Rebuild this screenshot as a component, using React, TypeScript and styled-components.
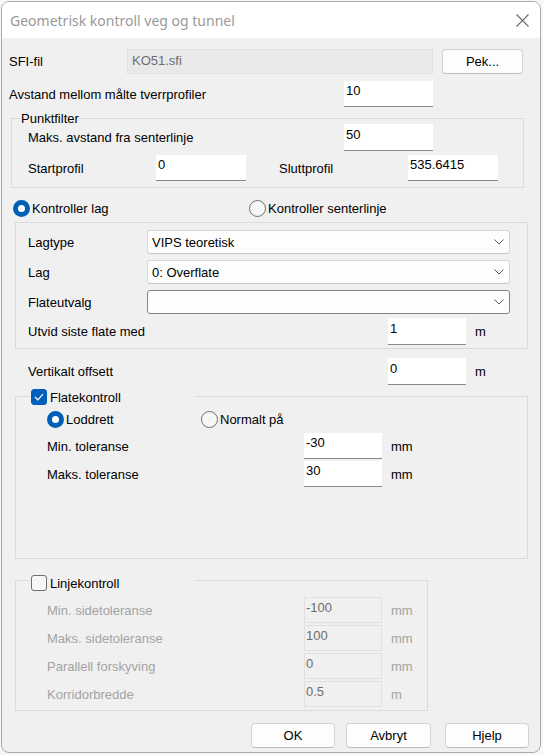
import React from "react";
import styled, { createGlobalStyle } from "styled-components";

const Global = createGlobalStyle`
  html, body { margin: 0; padding: 0; background: #f7f7f7; }
  body { font-family: "Liberation Sans", Arial, sans-serif; font-size: 13px; color: #000; }
  * { box-sizing: border-box; }
`;

const Window = styled.div`
  margin: 1px 0 0 1px;
  width: 540px;
  height: 752px;
  border: 1px solid #a9a9a9;
  border-radius: 8px;
  overflow: hidden;
  background: #f0f0f0;
  display: flex;
  flex-direction: column;
`;

const TitleBar = styled.div`
  flex: none;
  height: 36px;
  background: #ffffff;
  display: flex;
  align-items: center;
  justify-content: space-between;
  padding: 0 11px 0 8px;
`;

const Title = styled.div`
  font-family: "Segoe UI", "Noto Sans", sans-serif;
  font-size: 14px;
  color: #999999;
`;

const Body = styled.div`
  flex: 1;
  display: flex;
  flex-direction: column;
  padding-top: 11px;
`;

const Row = styled.div<{ $ml?: number; $mt?: number; $h: number }>`
  display: flex;
  align-items: center;
  height: ${(p) => p.$h}px;
  margin-left: ${(p) => p.$ml ?? 0}px;
  margin-top: ${(p) => p.$mt ?? 0}px;
  flex: none;
`;

const Label = styled.span<{ $w?: number; $ml?: number; $disabled?: boolean }>`
  flex: none;
  width: ${(p) => (p.$w ? `${p.$w}px` : "auto")};
  margin-left: ${(p) => p.$ml ?? 0}px;
  color: ${(p) => (p.$disabled ? "#a3a3a3" : "#000")};
  white-space: nowrap;
`;

const Input = styled.input<{ $w: number; $h?: number }>`
  flex: none;
  width: ${(p) => p.$w}px;
  height: ${(p) => p.$h ?? 26}px;
  font: inherit;
  color: #000;
  background: #ffffff;
  border: none;
  border-bottom: 1px solid #8a8a8a;
  border-radius: 0;
  padding: 0 2px 6px 2px;
  margin: 0;
  outline: none;
  &:disabled {
    background: #f0f0f0;
    border: 1px solid #e0e0e0;
    color: #6d6d6d;
    padding: 0 1px 6px 1px;
  }
`;

const ReadField = styled.div<{ $w: number }>`
  flex: none;
  width: ${(p) => p.$w}px;
  height: 25px;
  background: #e9e9e9;
  border: 1px solid #e2e2e2;
  color: #6d6d6d;
  padding: 3px 0 0 4px;
`;

const Button = styled.button<{ $w: number; $ml?: number }>`
  flex: none;
  width: ${(p) => p.$w}px;
  height: 25px;
  margin: 0 0 0 ${(p) => p.$ml ?? 0}px;
  font: inherit;
  color: #000;
  background: #fdfdfd;
  border: 1px solid #d3d3d3;
  border-bottom-color: #bdbdbd;
  border-radius: 4px;
  padding: 0;
`;

const Group = styled.div<{ $w: number; $h: number; $ml: number; $mt: number; $pt: number; $pl: number }>`
  position: relative;
  flex: none;
  width: ${(p) => p.$w}px;
  height: ${(p) => p.$h}px;
  margin-left: ${(p) => p.$ml}px;
  margin-top: ${(p) => p.$mt}px;
  padding: ${(p) => p.$pt}px 0 0 ${(p) => p.$pl}px;
  border: 1px solid #dadada;
  display: flex;
  flex-direction: column;
`;

const Legend = styled.div<{ $left: number; $top: number; $w?: number }>`
  position: absolute;
  left: ${(p) => p.$left}px;
  top: ${(p) => p.$top}px;
  width: ${(p) => (p.$w ? `${p.$w}px` : "auto")};
  height: 16px;
  display: flex;
  align-items: center;
  background: #f0f0f0;
  padding: 0 1px;
`;

const Option = styled.div<{ $w?: number }>`
  display: flex;
  align-items: center;
  width: ${(p) => (p.$w ? `${p.$w}px` : "auto")};
  flex: none;
`;

const RadioDot = styled.span<{ $on?: boolean }>`
  flex: none;
  width: 17px;
  height: 17px;
  border-radius: 50%;
  background: ${(p) => (p.$on ? "#ffffff" : "#f7f7f7")};
  border: ${(p) => (p.$on ? "5px solid #005fb8" : "1px solid #6f6f6f")};
  margin-right: 2px;
`;

const CheckBox = styled.span<{ $on?: boolean }>`
  flex: none;
  width: 16px;
  height: 16px;
  border-radius: 3px;
  background: ${(p) => (p.$on ? "#005fb8" : "#f7f7f7")};
  border: ${(p) => (p.$on ? "1px solid #005fb8" : "1px solid #6f6f6f")};
  display: flex;
  align-items: center;
  justify-content: center;
  margin-right: 3px;
`;

const Select = styled.div<{ $w: number; $focus?: boolean }>`
  flex: none;
  width: ${(p) => p.$w}px;
  height: 24px;
  background: #fdfdfd;
  border: 1px solid ${(p) => (p.$focus ? "#858585" : "#d7d7d7")};
  border-bottom-color: ${(p) => (p.$focus ? "#858585" : "#c6c6c6")};
  border-radius: 3px;
  display: flex;
  align-items: center;
  justify-content: space-between;
  padding: 0 5px 0 4px;
`;

const Unit = styled.span<{ $disabled?: boolean }>`
  margin-left: 9px;
  color: ${(p) => (p.$disabled ? "#a3a3a3" : "#000")};
`;

const Chevron = () => (
  <svg width="10" height="6" viewBox="0 0 10 6">
    <polyline points="0.5,0.5 5,5 9.5,0.5" fill="none" stroke="#5a5a5a" strokeWidth="1" />
  </svg>
);

const CloseIcon = () => (
  <svg width="13" height="13" viewBox="0 0 13 13">
    <path d="M0.5 0.5 L12.5 12.5 M12.5 0.5 L0.5 12.5" stroke="#6a6a6a" strokeWidth="1.1" fill="none" />
  </svg>
);

const Check = () => (
  <svg width="10" height="8" viewBox="0 0 10 8">
    <polyline points="1,4 3.8,6.8 9,1.2" fill="none" stroke="#ffffff" strokeWidth="1.2" />
  </svg>
);

type FieldRowProps = { label: string; value: string; unit: string; mt: number; disabled?: boolean };

const ToleranceRow = ({ label, value, unit, mt, disabled }: FieldRowProps) => (
  <Row $h={26} $mt={mt}>
    <Label $w={257} $disabled={disabled}>{label}</Label>
    <Input $w={78} value={value} readOnly disabled={disabled} />
    <Unit $disabled={disabled}>{unit}</Unit>
  </Row>
);

export default function App() {
  return (
    <>
      <Global />
      <Window>
        <TitleBar>
          <Title>Geometrisk kontroll veg og tunnel</Title>
          <CloseIcon />
        </TitleBar>
        <Body>
          <Row $h={25} $ml={7}>
            <Label $w={118}>SFI-fil</Label>
            <ReadField $w={306}>KO51.sfi</ReadField>
            <Button $w={81} $ml={9}>Pek...</Button>
          </Row>
          <Row $h={26} $ml={7} $mt={7}>
            <Label $w={335}>Avstand mellom målte tverrprofiler</Label>
            <Input $w={89} value="10" readOnly />
          </Row>

          <Group $w={513} $h={70} $ml={9} $mt={11} $pt={5} $pl={16}>
            <Legend $left={8} $top={-9}>Punktfilter</Legend>
            <Row $h={27}>
              <Label $w={316}>Maks. avstand fra senterlinje</Label>
              <Input $w={89} $h={27} value="50" readOnly />
            </Row>
            <Row $h={26} $mt={4}>
              <Label $w={128}>Startprofil</Label>
              <Input $w={90} value="0" readOnly />
              <Label $w={129} $ml={33}>Sluttprofil</Label>
              <Input $w={90} value="535.6415" readOnly />
            </Row>
          </Group>

          <Row $h={16} $ml={11} $mt={12}>
            <Option $w={236}>
              <RadioDot $on />
              <Label>Kontroller lag</Label>
            </Option>
            <Option>
              <RadioDot />
              <Label>Kontroller senterlinje</Label>
            </Option>
          </Row>

          <Group $w={513} $h={127} $ml={13} $mt={6} $pt={7} $pl={12}>
            <Row $h={24}>
              <Label $w={119}>Lagtype</Label>
              <Select $w={363}>
                <span>VIPS teoretisk</span>
                <Chevron />
              </Select>
            </Row>
            <Row $h={24} $mt={6}>
              <Label $w={119}>Lag</Label>
              <Select $w={363}>
                <span>0: Overflate</span>
                <Chevron />
              </Select>
            </Row>
            <Row $h={24} $mt={6}>
              <Label $w={119}>Flateutvalg</Label>
              <Select $w={363} $focus>
                <span></span>
                <Chevron />
              </Select>
            </Row>
            <Row $h={27} $mt={4}>
              <Label $w={360}>Utvid siste flate med</Label>
              <Input $w={78} $h={27} value="1" readOnly />
              <Unit>m</Unit>
            </Row>
          </Group>

          <Row $h={27} $ml={26} $mt={9}>
            <Label $w={360}>Vertikalt offsett</Label>
            <Input $w={78} $h={27} value="0" readOnly />
            <Unit>m</Unit>
          </Row>

          <Group $w={513} $h={163} $ml={13} $mt={11} $pt={14} $pl={31}>
            <Legend $left={14} $top={-8} $w={165}>
              <CheckBox $on>
                <Check />
              </CheckBox>
              <Label>Flatekontroll</Label>
            </Legend>
            <Row $h={16}>
              <Option $w={154}>
                <RadioDot $on />
                <Label>Loddrett</Label>
              </Option>
              <Option>
                <RadioDot />
                <Label>Normalt på</Label>
              </Option>
            </Row>
            <ToleranceRow label="Min. toleranse" value="-30" unit="mm" mt={6} />
            <ToleranceRow label="Maks. toleranse" value="30" unit="mm" mt={2} />
          </Group>

          <Group $w={413} $h={131} $ml={13} $mt={21} $pt={16} $pl={31}>
            <Legend $left={14} $top={-6} $w={165}>
              <CheckBox />
              <Label>Linjekontroll</Label>
            </Legend>
            <ToleranceRow label="Min. sidetoleranse" value="-100" unit="mm" mt={0} disabled />
            <ToleranceRow label="Maks. sidetoleranse" value="100" unit="mm" mt={2} disabled />
            <ToleranceRow label="Parallell forskyving" value="0" unit="mm" mt={2} disabled />
            <ToleranceRow label="Korridorbredde" value="0.5" unit="m" mt={2} disabled />
          </Group>

          <Row $h={25} $ml={249} $mt={12}>
            <Button $w={84}>OK</Button>
            <Button $w={85} $ml={11}>Avbryt</Button>
            <Button $w={84} $ml={14}>Hjelp</Button>
          </Row>
        </Body>
      </Window>
    </>
  );
}
